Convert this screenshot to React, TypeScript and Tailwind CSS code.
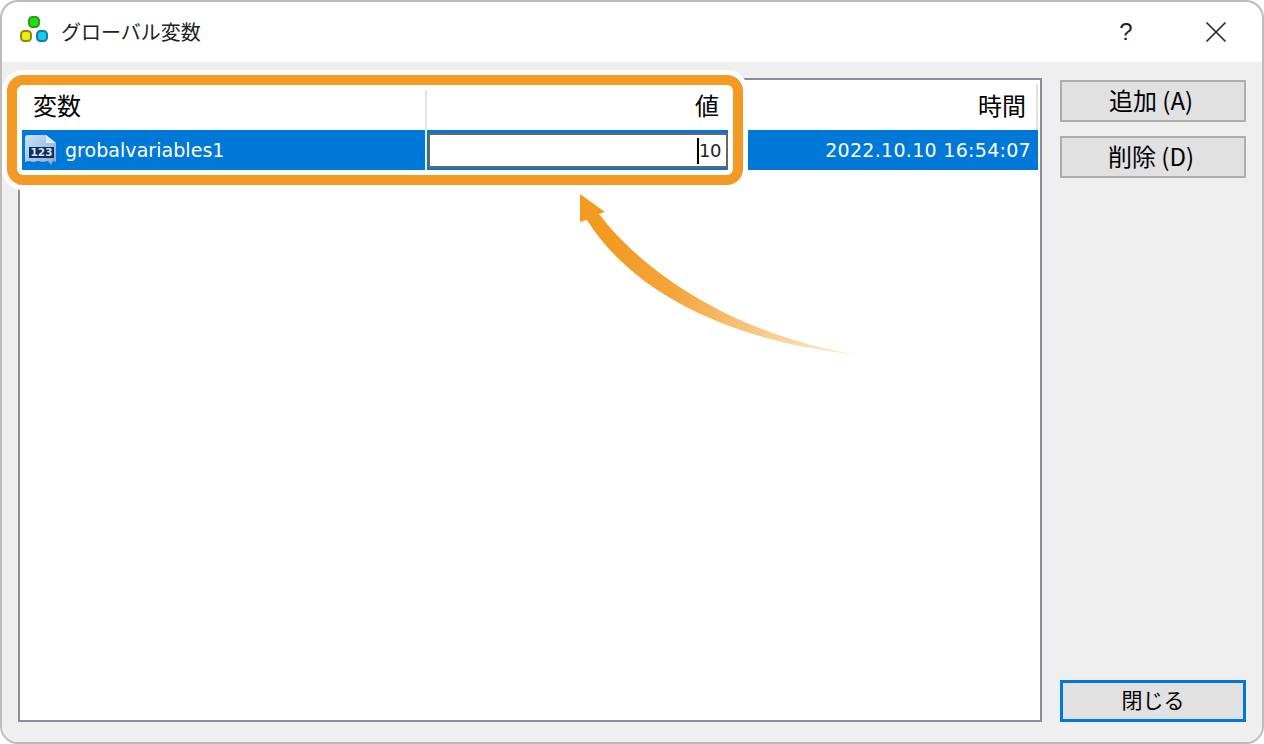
import React from "react";

const jp = "font-['Noto_Sans_CJK_JP','Liberation_Sans',sans-serif]";

function AppIcon() {
  return (
    <svg width="28" height="28" viewBox="0 0 28 28" className="shrink-0 overflow-visible">
      <rect x="10" y="-1" width="10" height="10" rx="3.5" fill="#22dd11" stroke="#2f9a20" strokeWidth="2" />
      <rect x="2" y="13" width="10" height="10" rx="3.5" fill="#eeee00" stroke="#8a8a18" strokeWidth="2" />
      <rect x="18" y="13" width="10" height="10" rx="3.5" fill="#11ccf2" stroke="#1f78a0" strokeWidth="2" />
    </svg>
  );
}

function NumIcon() {
  return (
    <svg width="34" height="34" viewBox="0 0 34 34" className="ml-[1px] shrink-0">
      <defs>
        <linearGradient id="ni" x1="0" y1="0" x2="1" y2="1">
          <stop offset="0" stopColor="#cfe2f7" />
          <stop offset="1" stopColor="#7fa9d8" />
        </linearGradient>
      </defs>
      <path d="M2 5 Q2 2 5 2 H23 L33 10 V29 L30 28 L28 32 L25 28 L20 29 L15 28 L10 29 L6 28 L2 29 Z" fill="url(#ni)" />
      <path d="M23 2 V10 H33 Z" fill="#e3eefa" />
      <rect x="6" y="14" width="25" height="11" fill="#0f2f5c" />
      <text x="18.5" y="23" textAnchor="middle" fontFamily="DejaVu Sans" fontWeight="700" fontSize="10.5" fill="#d5e6f8">123</text>
    </svg>
  );
}

function Btn({ children, primary }: { children: React.ReactNode; primary?: boolean }) {
  return (
    <button
      className={
        primary
          ? `h-[42px] w-[186px] border-[3px] border-[#0078d7] bg-[#e1e1e1] pb-[4px] text-[21px] leading-none text-black ${jp}`
          : `h-[42px] w-[186px] border-2 border-[#adadad] bg-[#e1e1e1] pb-[3px] pr-[4px] text-[24px] leading-none text-black ${jp}`
      }
    >
      {children}
    </button>
  );
}

export default function App() {
  return (
    <div className={`relative flex h-[744px] w-[1264px] flex-col overflow-hidden rounded-[18px] border-2 border-[#bcbcbc] bg-white ${jp}`}>
      {/* title bar */}
      <div className="flex h-[60px] shrink-0 items-center pl-[17px]">
        <AppIcon />
        <span className="ml-[14px] text-[20px] leading-none text-[#222]">グローバル変数</span>
        <div className="ml-auto flex items-center">
          <span className="w-[20px] text-center font-['Liberation_Sans',sans-serif] text-[24px] leading-none text-[#222]">?</span>
          <svg width="24" height="24" viewBox="0 0 24 24" className="ml-[68px] mr-[34px]">
            <path d="M2.5 2.5 L21.5 21.5 M21.5 2.5 L2.5 21.5" stroke="#222" strokeWidth="1.6" fill="none" />
          </svg>
        </div>
      </div>

      {/* body */}
      <div className="flex flex-1 gap-[18px] bg-[#efefef] pb-[20px] pl-[16px] pr-[16px] pt-[16px]">
        {/* list */}
        <div className="flex w-[1024px] flex-col border-2 border-[#8a8d99] bg-white pl-[2px] pr-[2px]">
          <div className="flex h-[50px] items-center text-[24px] leading-none text-black">
            <div className="flex h-full w-[403px] items-center pl-[11px]">変数</div>
            <div className="mt-[10px] h-[40px] w-[2px] self-start bg-[#e3e3e3]" />
            <div className="flex h-full w-[293px] items-center justify-end pr-[1px]">値</div>
            <div className="flex h-full flex-1 items-center justify-end pr-[10px]">時間</div>
            <div className="mt-[4px] h-[46px] w-[2px] self-start bg-[#e3e3e3]" />
          </div>
          <div className="flex h-[40px] items-stretch bg-[#0078d7] text-white">
            <div className="flex w-[403px] items-center">
              <NumIcon />
              <span className="ml-[8px] font-['DejaVu_Sans',sans-serif] text-[19px] leading-none tracking-[0.05px]">grobalvariables1</span>
            </div>
            <div className="w-[2px] bg-[#e8eef5]" />
            <div className="flex w-[301px] items-center pb-[2px] pl-[1px] pt-[3px]">
              <div className="flex h-full w-full items-center justify-end border-2 border-[#666] bg-white pr-[5px] font-['DejaVu_Sans',sans-serif] text-[18px] leading-none tracking-[-0.5px] text-[#222]">
                <span className="h-[26px] w-[2px] bg-black" />
                <span>10</span>
              </div>
            </div>
            <div className="flex flex-1 items-center justify-end pr-[7px] font-['DejaVu_Sans',sans-serif] text-[19px] leading-none tracking-[0.3px]">
              2022.10.10 16:54:07
            </div>
          </div>
        </div>

        {/* buttons */}
        <div className="flex flex-col pt-[2px]">
          <div className="flex flex-col gap-[14px]">
            <Btn>追加 (A)</Btn>
            <Btn>削除 (D)</Btn>
          </div>
          <div className="mt-auto">
            <Btn primary>閉じる</Btn>
          </div>
        </div>
      </div>

      {/* highlight */}
      <div className="pointer-events-none absolute left-[5px] top-[73px] h-[110px] w-[736px] rounded-[16px] border-[10px] border-[#f39a24] shadow-[0_0_0_5px_#ffffff,inset_0_0_0_5px_#ffffff]" />

      {/* arrow */}
      <svg className="pointer-events-none absolute left-[568px] top-[182px]" width="300" height="180" viewBox="570 184 300 180">
        <defs>
          <linearGradient id="arr" gradientUnits="userSpaceOnUse" x1="610" y1="235" x2="860" y2="355">
            <stop offset="0" stopColor="#f39a21" />
            <stop offset="0.3" stopColor="#f4a63c" />
            <stop offset="0.65" stopColor="#f8c986" />
            <stop offset="1" stopColor="#fff3e2" />
          </linearGradient>
        </defs>
        <path d="M580 194 L605 212 L599 214 C640 268 730 335 860 355 C730 342 632 292 587 220 L580 222 Z" fill="url(#arr)" />
      </svg>
    </div>
  );
}
